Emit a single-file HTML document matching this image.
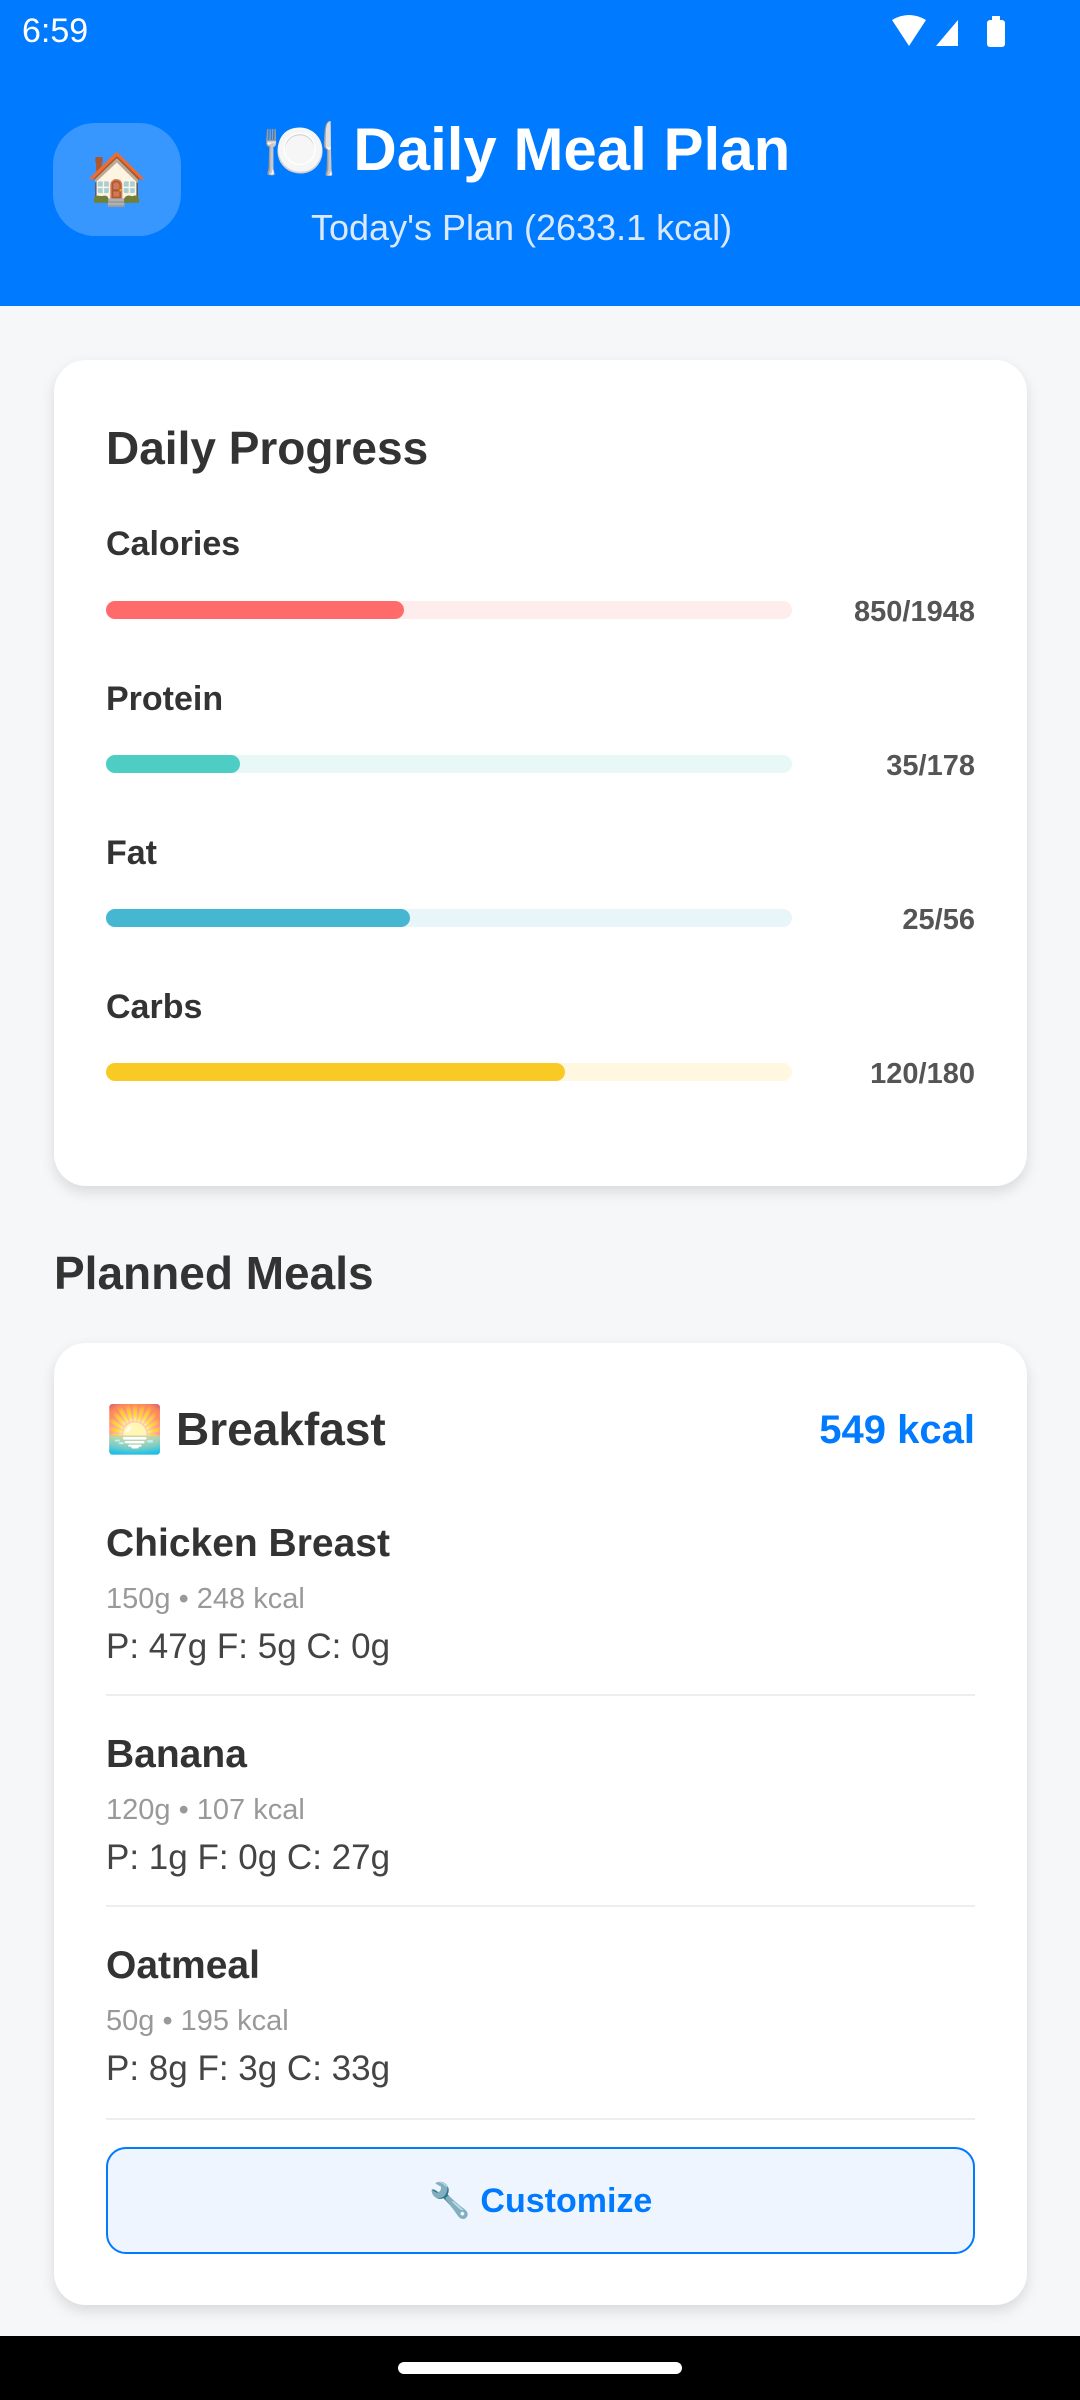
<!DOCTYPE html>
<html><head><meta charset="utf-8"><style>
*{margin:0;padding:0;box-sizing:border-box}
body{width:1080px;height:2400px;background:#f6f7f9;font-family:"Liberation Sans","Noto Sans CJK SC",sans-serif;color:#333;position:relative;overflow:hidden}
.abs{position:absolute}
.hdr{left:0;top:0;width:1080px;height:306px;background:#007AFF}
.card{background:#fff;border-radius:32px;box-shadow:0 6px 14px rgba(0,0,0,0.12)}
.lbl{left:106px;font-size:34px;font-weight:bold;color:#333}
.bar{left:106px;width:686px;height:18px;border-radius:9px}
.fill{position:absolute;left:0;top:0;height:18px;border-radius:9px}
.val{right:105px;font-size:29px;font-weight:bold;color:#555;text-align:right}
.fname{left:106px;font-size:39px;font-weight:bold;color:#333}
.fsub{left:106px;font-size:29px;color:#999}
.fmac{left:106px;font-size:35px;color:#444}
.div{left:106px;width:869px;height:2px;background:#eee}
</style></head><body>
<div class="abs hdr"></div>
<div class="abs" style="left:22px;top:12px;font-size:34px;color:#fff">6:59</div>
<svg class="abs" style="left:890px;top:14px" width="120" height="36" viewBox="0 0 120 36">
<path d="M2 6 Q19 -4 36 6 L19 32 Z" fill="#fff"/>
<path d="M46 32 L68 6 L68 32 Z" fill="#fff"/>
<rect x="97" y="6" width="18" height="27" rx="3" fill="#fff"/><rect x="102" y="2" width="8" height="5" fill="#fff"/>
</svg>
<div class="abs" style="left:53px;top:123px;width:128px;height:113px;border-radius:42px;background:rgba(255,255,255,0.22);font-size:50px;line-height:113px;text-align:center">🏠</div>
<div class="abs" style="left:262px;top:110px;font-size:60px;font-weight:bold;color:#fff;white-space:nowrap;line-height:80px">🍽️ Daily Meal Plan</div>
<div class="abs" style="left:311px;top:207px;font-size:36px;color:#dbe9ff;white-space:nowrap">Today's Plan (2633.1 kcal)</div>

<div class="abs card" style="left:54px;top:360px;width:973px;height:826px"></div>
<div class="abs" style="left:106px;top:421px;font-size:46px;font-weight:bold">Daily Progress</div>

<div class="abs lbl" style="top:525px">Calories</div>
<div class="abs bar" style="top:601px;background:#FFECEC"><div class="fill" style="width:298px;background:#FF6B6B"></div></div>
<div class="abs val" style="top:596px">850/1948</div>

<div class="abs lbl" style="top:680px">Protein</div>
<div class="abs bar" style="top:755px;background:#E8F8F6"><div class="fill" style="width:134px;background:#4ECDC4"></div></div>
<div class="abs val" style="top:750px">35/178</div>

<div class="abs lbl" style="top:834px">Fat</div>
<div class="abs bar" style="top:909px;background:#E8F5F9"><div class="fill" style="width:304px;background:#45B7D1"></div></div>
<div class="abs val" style="top:904px">25/56</div>

<div class="abs lbl" style="top:988px">Carbs</div>
<div class="abs bar" style="top:1063px;background:#FFF7E0"><div class="fill" style="width:459px;background:#F9CA24"></div></div>
<div class="abs val" style="top:1058px">120/180</div>

<div class="abs" style="left:54px;top:1246px;font-size:46px;font-weight:bold">Planned Meals</div>

<div class="abs card" style="left:54px;top:1343px;width:973px;height:962px"></div>
<div class="abs" style="left:106px;top:1402px;font-size:46px;font-weight:bold;white-space:nowrap">🌅 Breakfast</div>
<div class="abs" style="right:105px;top:1408px;font-size:40px;font-weight:bold;color:#007AFF">549 kcal</div>

<div class="abs fname" style="top:1522px">Chicken Breast</div>
<div class="abs fsub" style="top:1583px">150g • 248 kcal</div>
<div class="abs fmac" style="top:1627px">P: 47g F: 5g C: 0g</div>
<div class="abs div" style="top:1694px"></div>

<div class="abs fname" style="top:1733px">Banana</div>
<div class="abs fsub" style="top:1794px">120g • 107 kcal</div>
<div class="abs fmac" style="top:1838px">P: 1g F: 0g C: 27g</div>
<div class="abs div" style="top:1905px"></div>

<div class="abs fname" style="top:1944px">Oatmeal</div>
<div class="abs fsub" style="top:2005px">50g • 195 kcal</div>
<div class="abs fmac" style="top:2049px">P: 8g F: 3g C: 33g</div>
<div class="abs div" style="top:2118px"></div>

<div class="abs" style="left:106px;top:2147px;width:869px;height:107px;border:2px solid #007AFF;border-radius:20px;background:#EEF5FF;text-align:center;line-height:105px;font-size:34px;font-weight:bold;color:#007AFF">🔧 Customize</div>

<div class="abs" style="left:0;top:2336px;width:1080px;height:64px;background:#000"></div>
<div class="abs" style="left:398px;top:2362px;width:284px;height:12px;border-radius:6px;background:#fff"></div>
</body></html>
